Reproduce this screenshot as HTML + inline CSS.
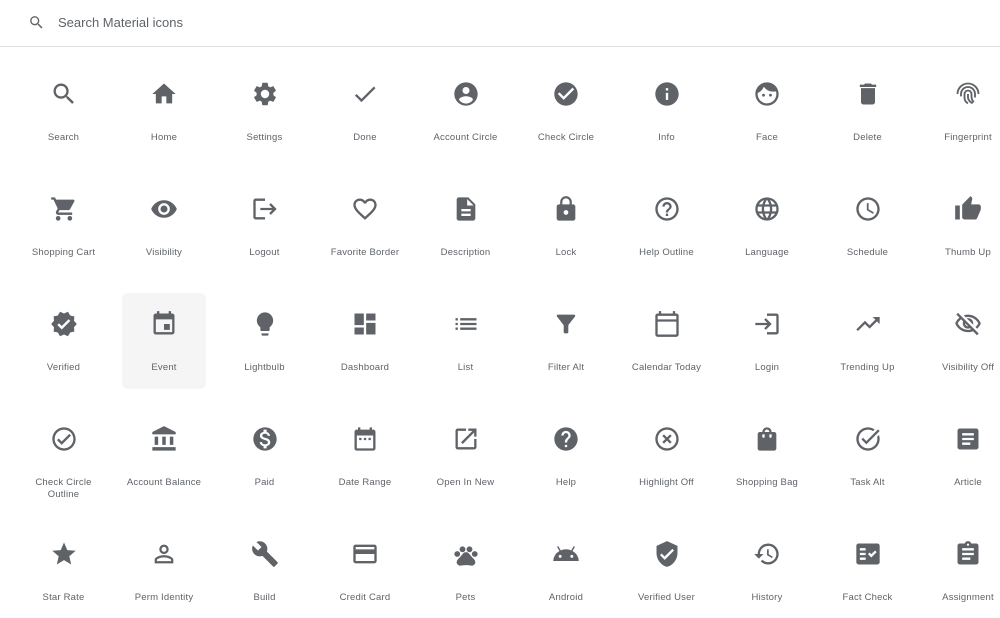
<!DOCTYPE html><html><head><meta charset="utf-8"><style>
body{margin:0;width:1000px;height:618px;overflow:hidden;background:#fff;font-family:"Liberation Sans",Arial,sans-serif;position:relative}
.top{position:absolute;left:0;top:0;width:1000px;height:46px;border-bottom:1px solid #e0e0e0}
.top svg{position:absolute;left:28px;top:14px}
.top span{position:absolute;left:58px;top:15px;font-size:13px;color:#5f6368}
.c{position:absolute;width:100px;text-align:center}
.c svg{display:block;margin:0 auto;fill:#5f6368}
.c div{font-size:9.5px;color:#5f6368;margin-top:24px;line-height:12px;letter-spacing:.2px}
.hl{position:absolute;left:122px;top:293px;width:84px;height:96px;background:#f5f5f5;border-radius:6px}
</style></head><body>
<div class="top"><svg width="17" height="17" viewBox="0 0 24 24" fill="#5f6368"><path d="M15.5 14h-.79l-.28-.27A6.47 6.47 0 0016 9.5 6.5 6.5 0 109.5 16c1.61 0 3.09-.59 4.23-1.57l.27.28v.79l5 4.99L20.49 19l-4.99-5zm-6 0C7.01 14 5 11.99 5 9.5S7.01 5 9.5 5 14 7.01 14 9.5 11.99 14 9.5 14z"/></svg><span>Search Material icons</span></div>
<div class="hl"></div>
<div id="g"></div>
<script>
const P={
search:'M15.5 14h-.79l-.28-.27A6.47 6.47 0 0016 9.5 6.5 6.5 0 109.5 16c1.61 0 3.09-.59 4.23-1.57l.27.28v.79l5 4.99L20.49 19l-4.99-5zm-6 0C7.01 14 5 11.99 5 9.5S7.01 5 9.5 5 14 7.01 14 9.5 11.99 14 9.5 14z',
home:'M10 20v-6h4v6h5v-8h3L12 3 2 12h3v8z',
settings:'M19.14 12.94c.04-.3.06-.61.06-.94 0-.32-.02-.64-.07-.94l2.03-1.58a.49.49 0 00.12-.61l-1.92-3.32a.49.49 0 00-.59-.22l-2.39.96c-.5-.38-1.03-.7-1.62-.94l-.36-2.54a.48.48 0 00-.48-.41h-3.84c-.24 0-.43.17-.47.41l-.36 2.54c-.59.24-1.13.57-1.62.94l-2.39-.96a.49.49 0 00-.59.22L2.74 8.87c-.12.21-.08.47.12.61l2.03 1.58c-.05.3-.09.63-.09.94s.02.64.07.94l-2.03 1.58a.49.49 0 00-.12.61l1.92 3.32c.12.22.37.29.59.22l2.39-.96c.5.38 1.03.7 1.62.94l.36 2.54c.05.24.24.41.48.41h3.84c.24 0 .44-.17.47-.41l.36-2.54c.59-.24 1.13-.56 1.62-.94l2.39.96c.22.08.47 0 .59-.22l1.92-3.32c.12-.22.07-.47-.12-.61l-2.01-1.58zM12 15.6A3.6 3.6 0 1112 8.4a3.6 3.6 0 010 7.2z',
done:'M9 16.2L4.8 12l-1.4 1.4L9 19 21 7l-1.4-1.4L9 16.2z',
acc:'M12 2C6.48 2 2 6.48 2 12s4.48 10 10 10 10-4.48 10-10S17.52 2 12 2zm0 4a3 3 0 110 6 3 3 0 010-6zm0 14.2a7.2 7.2 0 01-6-3.22c.03-1.99 4-3.08 6-3.08 1.99 0 5.97 1.09 6 3.08a7.2 7.2 0 01-6 3.22z',
chk:'M12 2C6.48 2 2 6.48 2 12s4.48 10 10 10 10-4.48 10-10S17.52 2 12 2zm-2 15l-5-5 1.41-1.41L10 14.17l7.59-7.59L19 8l-9 9z',
info:'M12 2C6.48 2 2 6.48 2 12s4.48 10 10 10 10-4.48 10-10S17.52 2 12 2zm1 15h-2v-6h2v6zm0-8h-2V7h2v2z',
face:'M9 11.75a1.25 1.25 0 100 2.5 1.25 1.25 0 000-2.5zm6 0a1.25 1.25 0 100 2.5 1.25 1.25 0 000-2.5zM12 2C6.48 2 2 6.48 2 12s4.48 10 10 10 10-4.48 10-10S17.52 2 12 2zm0 18c-4.41 0-8-3.59-8-8 0-.29.02-.58.05-.86 2.36-1.05 4.23-2.98 5.21-5.37A9.97 9.97 0 0017.42 10c.78 0 1.53-.09 2.25-.26.21.71.33 1.47.33 2.26 0 4.41-3.59 8-8 8z',
del:'M6 19c0 1.1.9 2 2 2h8c1.1 0 2-.9 2-2V7H6v12zM19 4h-3.5l-1-1h-5l-1 1H5v2h14V4z',
fp:'M12 3a9 9 0 00-9 9M12 3a9 9 0 019 9M12 6a6 6 0 00-6 6v2M12 6a6 6 0 016 6v3M12 9a3 3 0 00-3 3v3c0 2 1 4 3 5M12 9a3 3 0 013 3v2c0 2 1 4 2 5M12 12v3c0 2 2 4 4 5',
cart:'M7 18c-1.1 0-1.99.9-1.99 2S5.9 22 7 22s2-.9 2-2-.9-2-2-2zM1 2v2h2l3.6 7.59-1.35 2.45c-.16.28-.25.61-.25.96 0 1.1.9 2 2 2h12v-2H7.42c-.14 0-.25-.11-.25-.25l.03-.12.9-1.63h7.45c.75 0 1.41-.41 1.75-1.03l3.58-6.49A1 1 0 0020 4H5.21l-.94-2H1zm16 16c-1.1 0-1.99.9-1.99 2s.89 2 1.99 2 2-.9 2-2-.9-2-2-2z',
vis:'M12 4.5C7 4.5 2.73 7.61 1 12c1.73 4.39 6 7.5 11 7.5s9.27-3.11 11-7.5c-1.73-4.39-6-7.5-11-7.5zM12 17a5 5 0 110-10 5 5 0 010 10zm0-8a3 3 0 100 6 3 3 0 000-6z',
logout:'M17 7l-1.41 1.41L18.17 11H8v2h10.17l-2.58 2.58L17 17l5-5zM4 5h8V3H4c-1.1 0-2 .9-2 2v14c0 1.1.9 2 2 2h8v-2H4V5z',
fav:'M16.5 3c-1.74 0-3.41.81-4.5 2.09C10.91 3.81 9.24 3 7.5 3 4.42 3 2 5.42 2 8.5c0 3.78 3.4 6.86 8.55 11.54L12 21.35l1.45-1.32C18.6 15.36 22 12.28 22 8.5 22 5.42 19.58 3 16.5 3zm-4.4 15.55l-.1.1-.1-.1C7.14 14.24 4 11.39 4 8.5 4 6.5 5.5 5 7.5 5c1.54 0 3.04.99 3.57 2.36h1.87C13.46 5.99 14.96 5 16.5 5c2 0 3.5 1.5 3.5 3.5 0 2.89-3.14 5.74-7.9 10.05z',
desc:'M14 2H6c-1.1 0-2 .9-2 2v16c0 1.1.89 2 1.99 2H18c1.1 0 2-.9 2-2V8l-6-6zm2 16H8v-2h8v2zm0-4H8v-2h8v2zm-3-5V3.5L18.5 9H13z',
lock:'M18 8h-1V6c0-2.76-2.24-5-5-5S7 3.24 7 6v2H6c-1.1 0-2 .9-2 2v10c0 1.1.9 2 2 2h12c1.1 0 2-.9 2-2V10c0-1.1-.9-2-2-2zm-6 9c-1.1 0-2-.9-2-2s.9-2 2-2 2 .9 2 2-.9 2-2 2zm3.1-9H8.9V6c0-1.71 1.39-3.1 3.1-3.1s3.1 1.39 3.1 3.1v2z',
help2:'M11 18h2v-2h-2v2zm1-16C6.48 2 2 6.48 2 12s4.48 10 10 10 10-4.48 10-10S17.52 2 12 2zm0 18c-4.41 0-8-3.59-8-8s3.59-8 8-8 8 3.59 8 8-3.59 8-8 8zm0-14c-2.21 0-4 1.79-4 4h2c0-1.1.9-2 2-2s2 .9 2 2c0 2-3 1.75-3 5h2c0-2.25 3-2.5 3-5 0-2.21-1.79-4-4-4z',
lang:'M12 2a10 10 0 100 20 10 10 0 000-20zm6.93 6h-2.95a15.65 15.65 0 00-1.38-3.56A8.03 8.03 0 0118.93 8zM12 4.04c.83 1.2 1.48 2.53 1.91 3.96h-3.82c.43-1.43 1.08-2.76 1.91-3.96zM4.26 14C4.1 13.36 4 12.69 4 12s.1-1.36.26-2h3.38c-.08.66-.14 1.32-.14 2s.06 1.34.14 2H4.26zm.82 2h2.95c.32 1.25.78 2.45 1.38 3.56A7.99 7.99 0 015.08 16zm2.95-8H5.08a7.99 7.99 0 014.33-3.56A15.65 15.65 0 008.03 8zM12 19.96c-.83-1.2-1.48-2.53-1.91-3.96h3.82c-.43 1.43-1.08 2.76-1.91 3.96zM14.34 14H9.66c-.09-.66-.16-1.32-.16-2s.07-1.35.16-2h4.68c.09.65.16 1.32.16 2s-.07 1.34-.16 2zm.25 5.56c.6-1.11 1.06-2.31 1.38-3.56h2.95a8.03 8.03 0 01-4.33 3.56zM16.36 14c.08-.66.14-1.32.14-2s-.06-1.34-.14-2h3.38c.16.64.26 1.31.26 2s-.1 1.36-.26 2h-3.38z',
sched:'M11.99 2C6.47 2 2 6.48 2 12s4.47 10 9.99 10C17.52 22 22 17.52 22 12S17.52 2 11.99 2zM12 20c-4.42 0-8-3.58-8-8s3.58-8 8-8 8 3.58 8 8-3.58 8-8 8zm.5-13H11v6l5.25 3.15.75-1.23-4.5-2.67z',
thumb:'M1 21h4V9H1v12zm22-11c0-1.1-.9-2-2-2h-6.31l.95-4.57.03-.32c0-.41-.17-.79-.44-1.06L14.17 1 7.59 7.59C7.22 7.95 7 8.45 7 9v10c0 1.1.9 2 2 2h9c.83 0 1.54-.5 1.84-1.22l3.02-7.05c.09-.23.14-.47.14-.73v-2z',
verif:'M23 12l-2.44-2.79.34-3.69-3.61-.82-1.89-3.2L12 2.96 8.6 1.5 6.71 4.69 3.1 5.5l.34 3.7L1 12l2.44 2.79-.34 3.7 3.61.82L8.6 22.5l3.4-1.47 3.4 1.46 1.89-3.19 3.61-.82-.34-3.69L23 12zm-12.91 4.72l-3.8-3.81 1.48-1.48 2.32 2.33 5.85-5.87 1.48 1.48-7.33 7.35z',
event:'M17 12h-5v5h5v-5zM16 1v2H8V1H6v2H5c-1.11 0-1.99.9-1.99 2L3 19a2 2 0 002 2h14c1.1 0 2-.9 2-2V5c0-1.1-.9-2-2-2h-1V1h-2zm3 18H5V8h14v11z',
bulb:'M9 21c0 .55.45 1 1 1h4c.55 0 1-.45 1-1v-1H9v1zm3-19C8.14 2 5 5.14 5 9c0 2.38 1.19 4.47 3 5.74V17c0 .55.45 1 1 1h6c.55 0 1-.45 1-1v-2.26c1.81-1.27 3-3.36 3-5.74 0-3.86-3.14-7-7-7z',
dash:'M3 13h8V3H3v10zm0 8h8v-6H3v6zm10 0h8V11h-8v10zm0-18v6h8V3h-8z',
list:'M3 13h2v-2H3v2zm0 4h2v-2H3v2zm0-8h2V7H3v2zm4 4h14v-2H7v2zm0 4h14v-2H7v2zM7 7v2h14V7H7z',
filter:'M4.25 5.61C6.27 8.2 10 13 10 13v6c0 .55.45 1 1 1h2c.55 0 1-.45 1-1v-6s3.72-4.8 5.74-7.39A1 1 0 0018.95 4H5.04a1 1 0 00-.79 1.61z',
cal:'M20 3h-1V1h-2v2H7V1H5v2H4c-1.1 0-2 .9-2 2v16c0 1.1.9 2 2 2h16c1.1 0 2-.9 2-2V5c0-1.1-.9-2-2-2zm0 18H4V10h16v11zm0-13H4V5h16v3z',
login:'M11 7L9.6 8.4l2.6 2.6H2v2h10.2l-2.6 2.6L11 17l5-5-5-5zm9 12h-8v2h8c1.1 0 2-.9 2-2V5c0-1.1-.9-2-2-2h-8v2h8v14z',
trend:'M16 6l2.29 2.29-4.88 4.88-4-4L2 16.59 3.41 18l6-6 4 4 6.3-6.29L22 12V6z',
visoff:'M12 6c3.79 0 7.17 2.13 8.82 5.5-.59 1.22-1.42 2.27-2.41 3.12l1.41 1.41c1.39-1.23 2.49-2.77 3.18-4.53C21.27 7.11 17 4 12 4c-1.27 0-2.49.2-3.64.57l1.65 1.65C10.66 6.09 11.32 6 12 6zm-1.07 1.14L13 9.21c.57.25 1.03.71 1.28 1.28l2.07 2.07c.08-.34.14-.7.14-1.07C16.5 9.01 14.48 7 12 7c-.37 0-.72.05-1.07.14zM2.01 3.87l2.68 2.68A11.74 11.74 0 001 11.5C2.73 15.89 7 19 12 19c1.52 0 2.98-.29 4.32-.82l3.42 3.42 1.41-1.41L3.42 2.45 2.01 3.87zm7.5 7.5l2.61 2.61c-.04.01-.08.02-.12.02-1.38 0-2.5-1.12-2.5-2.5 0-.05.01-.08.01-.13zm-3.4-3.4l1.75 1.75c-.23.55-.36 1.15-.36 1.78 0 2.48 2.02 4.5 4.5 4.5.63 0 1.23-.13 1.77-.36l.98.98c-.88.24-1.8.38-2.75.38-3.79 0-7.17-2.13-8.82-5.5.7-1.43 1.72-2.61 2.93-3.53z',
chko:'M12 2C6.48 2 2 6.48 2 12s4.48 10 10 10 10-4.48 10-10S17.52 2 12 2zm0 18c-4.41 0-8-3.59-8-8s3.59-8 8-8 8 3.59 8 8-3.59 8-8 8zm4.59-12.42L10 14.17l-2.59-2.58L6 13l4 4 8-8z',
bank:'M4 10h3v7H4zM10.5 10h3v7h-3zM2 19h20v3H2zM17 10h3v7h-3zM12 1L2 6v2h20V6z',
paid:'M12 2C6.48 2 2 6.48 2 12s4.48 10 10 10 10-4.48 10-10S17.52 2 12 2zm1.41 16.09V20h-2.67v-1.93c-1.71-.36-3.16-1.46-3.27-3.4h1.96c.1 1.05.82 1.87 2.65 1.87 1.96 0 2.4-.98 2.4-1.59 0-.83-.44-1.61-2.67-2.14-2.48-.6-4.18-1.62-4.18-3.67 0-1.72 1.39-2.84 3.11-3.21V4h2.67v1.95c1.86.45 2.79 1.86 2.85 3.39H14.3c-.05-1.11-.64-1.87-2.22-1.87-1.5 0-2.4.68-2.4 1.64 0 .84.65 1.39 2.67 1.910s4.18 1.39 4.18 3.91c-.01 1.83-1.38 2.83-3.12 3.16z',
drange:'M9 11H7v2h2v-2zm4 0h-2v2h2v-2zm4 0h-2v2h2v-2zm2-7h-1V2h-2v2H8V2H6v2H5c-1.11 0-1.99.9-1.99 2L3 20a2 2 0 002 2h14c1.1 0 2-.9 2-2V6c0-1.1-.9-2-2-2zm0 16H5V9h14v11z',
open:'M19 19H5V5h7V3H5a2 2 0 00-2 2v14a2 2 0 002 2h14c1.1 0 2-.9 2-2v-7h-2v7zM14 3v2h3.59l-9.83 9.83 1.41 1.41L19 6.41V10h2V3h-7z',
help:'M12 2C6.48 2 2 6.48 2 12s4.48 10 10 10 10-4.48 10-10S17.52 2 12 2zm1 17h-2v-2h2v2zm2.07-7.75l-.9.92C13.45 12.9 13 13.5 13 15h-2v-.5c0-1.1.45-2.1 1.17-2.83l1.24-1.26c.37-.36.59-.86.59-1.41 0-1.1-.9-2-2-2s-2 .9-2 2H8c0-2.21 1.79-4 4-4s4 1.79 4 4c0 .88-.36 1.68-.93 2.25z',
hoff:'M14.59 8L12 10.59 9.41 8 8 9.41 10.59 12 8 14.59 9.41 16 12 13.41 14.59 16 16 14.59 13.41 12 16 9.41 14.59 8zM12 2C6.47 2 2 6.47 2 12s4.47 10 10 10 10-4.47 10-10S17.53 2 12 2zm0 18c-4.41 0-8-3.59-8-8s3.59-8 8-8 8 3.59 8 8-3.59 8-8 8z',
bag:'M18 6h-2c0-2.21-1.79-4-4-4S8 3.79 8 6H6c-1.1 0-2 .9-2 2v12c0 1.1.9 2 2 2h12c1.1 0 2-.9 2-2V8c0-1.1-.9-2-2-2zm-8 4c0 .55-.45 1-1 1s-1-.45-1-1V8h2v2zm2-6c1.1 0 2 .9 2 2h-4c0-1.1.9-2 2-2zm4 6c0 .55-.45 1-1 1s-1-.45-1-1V8h2v2z',
task:'M22 5.18L10.59 16.6l-4.24-4.24 1.41-1.41 2.83 2.83 10-10L22 5.18zM19.79 10.22C19.92 10.79 20 11.39 20 12c0 4.42-3.58 8-8 8s-8-3.58-8-8 3.58-8 8-8c1.58 0 3.04.46 4.28 1.25l1.44-1.44A9.9 9.9 0 0012 2C6.48 2 2 6.48 2 12s4.48 10 10 10 10-4.48 10-10c0-1.19-.22-2.33-.6-3.39l-1.61 1.61z',
art:'M19 3H5c-1.1 0-2 .9-2 2v14c0 1.1.9 2 2 2h14c1.1 0 2-.9 2-2V5c0-1.1-.9-2-2-2zm-5 14H7v-2h7v2zm3-4H7v-2h10v2zm0-4H7V7h10v2z',
star:'M12 17.27L18.18 21l-1.64-7.03L22 9.24l-7.19-.61L12 2 9.19 8.63 2 9.24l5.46 4.73L5.82 21z',
perm:'M12 5.9a2.1 2.1 0 110 4.2 2.1 2.1 0 010-4.2m0 9c2.97 0 6.1 1.46 6.1 2.1v1.1H5.9V17c0-.64 3.13-2.1 6.1-2.1M12 4C9.79 4 8 5.79 8 8s1.79 4 4 4 4-1.79 4-4-1.79-4-4-4zm0 9c-2.67 0-8 1.34-8 4v3h16v-3c0-2.66-5.33-4-8-4z',
build:'M22.7 19l-9.1-9.1c.9-2.3.4-5-1.5-6.9-2-2-5-2.4-7.4-1.3L9 6 6 9 1.6 4.7C.4 7.1.9 10.1 2.9 12.1c1.9 1.9 4.6 2.4 6.9 1.5l9.1 9.1c.4.4 1 .4 1.4 0l2.3-2.3c.5-.4.5-1.1.1-1.4z',
card:'M20 4H4c-1.11 0-1.99.89-1.99 2L2 18c0 1.11.89 2 2 2h16c1.11 0 2-.89 2-2V6c0-1.11-.89-2-2-2zm0 14H4v-6h16v6zm0-10H4V6h16v2z',
pets:'M4.5 9.5a2.5 2.5 0 100 5 2.5 2.5 0 000-5zM9 5.5a2.5 2.5 0 100 5 2.5 2.5 0 000-5zm6 0a2.5 2.5 0 100 5 2.5 2.5 0 000-5zm4.5 4a2.5 2.5 0 100 5 2.5 2.5 0 000-5zm-2.16 5.36c-.87-1.02-1.6-1.89-2.48-2.91-.46-.54-1.05-1.08-1.75-1.32-.11-.04-.22-.07-.33-.09-.25-.04-.52-.04-.78-.04s-.53 0-.79.05c-.11.02-.22.05-.33.09-.7.24-1.28.78-1.75 1.32-.87 1.02-1.6 1.89-2.48 2.91-1.31 1.31-2.92 2.76-2.62 4.79.29 1.02 1.02 2.03 2.33 2.32.73.15 3.06-.44 5.54-.44h.18c2.48 0 4.81.58 5.54.44 1.31-.29 2.04-1.31 2.33-2.32.31-2.04-1.3-3.49-2.61-4.8z',
android:'M17.6 9.48l1.84-3.18c.16-.31.04-.69-.26-.85a.637.637 0 00-.83.22l-1.88 3.24a11.46 11.46 0 00-8.94 0L5.65 5.67a.643.643 0 00-.87-.2c-.28.18-.37.54-.22.83L6.4 9.48A10.8 10.8 0 001 18h22a10.8 10.8 0 00-5.4-8.52zM7 15.25a1.25 1.25 0 110-2.5 1.25 1.25 0 010 2.5zm10 0a1.25 1.25 0 110-2.5 1.25 1.25 0 010 2.5z',
vuser:'M12 1L3 5v6c0 5.55 3.84 10.74 9 12 5.16-1.26 9-6.45 9-12V5l-9-4zm-2 16l-4-4 1.41-1.41L10 14.17l6.59-6.59L18 9l-8 8z',
hist:'M13 3a9 9 0 00-9 9H1l3.89 3.89.07.14L9 12H6c0-3.87 3.13-7 7-7s7 3.13 7 7-3.13 7-7 7c-1.93 0-3.68-.79-4.94-2.06l-1.42 1.42A8.95 8.95 0 0013 21a9 9 0 000-18zm-1 5v5l4.28 2.54.72-1.21-3.5-2.08V8H12z',
fact:'M20 3H4c-1.1 0-2 .9-2 2v14c0 1.1.9 2 2 2h16c1.1 0 2-.9 2-2V5c0-1.1-.9-2-2-2zM10 17H5v-2h5v2zm0-4H5v-2h5v2zm0-4H5V7h5v2zm4.82 6L12 12.16l1.41-1.41 1.41 1.42L17.99 9l1.42 1.42L14.82 15z',
assign:'M19 3h-4.18C14.4 1.84 13.3 1 12 1s-2.4.84-2.82 2H5c-1.1 0-2 .9-2 2v14c0 1.1.9 2 2 2h14c1.1 0 2-.9 2-2V5c0-1.1-.9-2-2-2zm-7 0c.55 0 1 .45 1 1s-.45 1-1 1-1-.45-1-1 .45-1 1-1zm2 14H7v-2h7v2zm3-4H7v-2h10v2zm0-4H7V7h10v2z'
};
const rows=[
[['search','Search'],['home','Home'],['settings','Settings'],['done','Done'],['acc','Account Circle'],['chk','Check Circle'],['info','Info'],['face','Face'],['del','Delete'],['fp','Fingerprint']],
[['cart','Shopping Cart'],['vis','Visibility'],['logout','Logout'],['fav','Favorite Border'],['desc','Description'],['lock','Lock'],['help2','Help Outline'],['lang','Language'],['sched','Schedule'],['thumb','Thumb Up']],
[['verif','Verified'],['event','Event'],['bulb','Lightbulb'],['dash','Dashboard'],['list','List'],['filter','Filter Alt'],['cal','Calendar Today'],['login','Login'],['trend','Trending Up'],['visoff','Visibility Off']],
[['chko','Check Circle<br>Outline'],['bank','Account Balance'],['paid','Paid'],['drange','Date Range'],['open','Open In New'],['help','Help'],['hoff','Highlight Off'],['bag','Shopping Bag'],['task','Task Alt'],['art','Article']],
[['star','Star Rate'],['perm','Perm Identity'],['build','Build'],['card','Credit Card'],['pets','Pets'],['android','Android'],['vuser','Verified User'],['hist','History'],['fact','Fact Check'],['assign','Assignment']]];
let h='';
rows.forEach((r,ri)=>r.forEach((c,ci)=>{
 const x=63.5+ci*100.5-50, y=80+ri*115;
 const p=c[0]=='fp'?`<path d="${P.fp}" fill="none" stroke="#5f6368" stroke-width="1.6"/>`:`<path d="${P[c[0]]}"/>`;
 h+=`<div class="c" style="left:${x}px;top:${y}px"><svg width="28" height="28" viewBox="0 0 24 24">${p}</svg><div>${c[1]}</div></div>`;
}));
document.getElementById('g').innerHTML=h;
</script>
</body></html>
